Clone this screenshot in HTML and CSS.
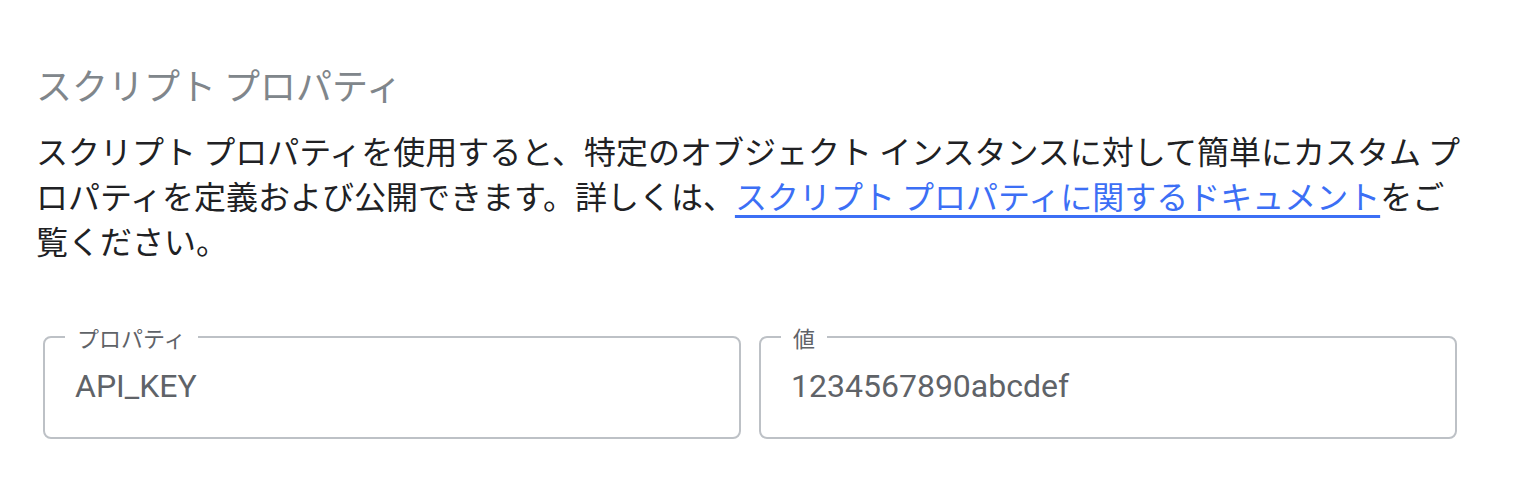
FILE: index.html
```html
<!DOCTYPE html>
<html lang="ja">
<head>
<meta charset="UTF-8" />
<meta name="viewport" content="width=device-width, initial-scale=1" />
<title>スクリプト プロパティ</title>
<link rel="stylesheet" href="styles.css">
</head>
<body>
<section class="props">
  <h2 class="props-title">スクリプト プロパティ</h2>
  <p class="props-desc">スクリプト プロパティを使用すると、特定のオブジェクト インスタンスに対して簡単にカスタム プロパティを定義および公開できます。詳しくは、<a href="#">スクリプト プロパティに関するドキュメント</a>をご覧ください。</p>

  <div class="props-row">
    <fieldset class="field">
      <legend>プロパティ</legend>
      <input type="text" value="API_KEY" />
    </fieldset>
    <fieldset class="field">
      <legend>値</legend>
      <input type="text" value="1234567890abcdef" />
    </fieldset>
  </div>
</section>
</body>
</html>
```

FILE: styles.css
```css
body {
  margin: 0;
  background: #fff;
  font-family: "Noto Sans CJK JP", "Noto Sans", sans-serif;
  color: #202124;
}
.props {
  padding: 58px 48px 0 36px;
}
.props-title {
  margin: 0;
  font-size: 36px;
  font-weight: 400;
  line-height: 52px;
  color: #80868b;
}
.props-desc {
  margin: 18px 0 0;
  font-size: 32px;
  line-height: 45px;
}
.props-desc a {
  color: #3c6ff5;
  text-decoration-thickness: 3px;
  text-underline-offset: 6px;
}
.props-row {
  display: flex;
  gap: 18px;
  margin: 60px 17px 0 7px;
}
.field {
  flex: 1;
  margin: 0;
  padding: 0 30px;
  height: 116px;
  box-sizing: border-box;
  border: 2px solid #bdc1c6;
  border-radius: 8px;
}
.field legend {
  padding: 0 12px;
  margin-left: -10px;
  font-size: 22px;
  color: #5f6368;
  line-height: 28px;
}
.field input {
  border: none;
  outline: none;
  width: 100%;
  padding: 0;
  margin-top: 16px;
  font-family: Roboto, "Noto Sans CJK JP", sans-serif;
  font-size: 32px;
  color: #5f6368;
  background: transparent;
}
```
